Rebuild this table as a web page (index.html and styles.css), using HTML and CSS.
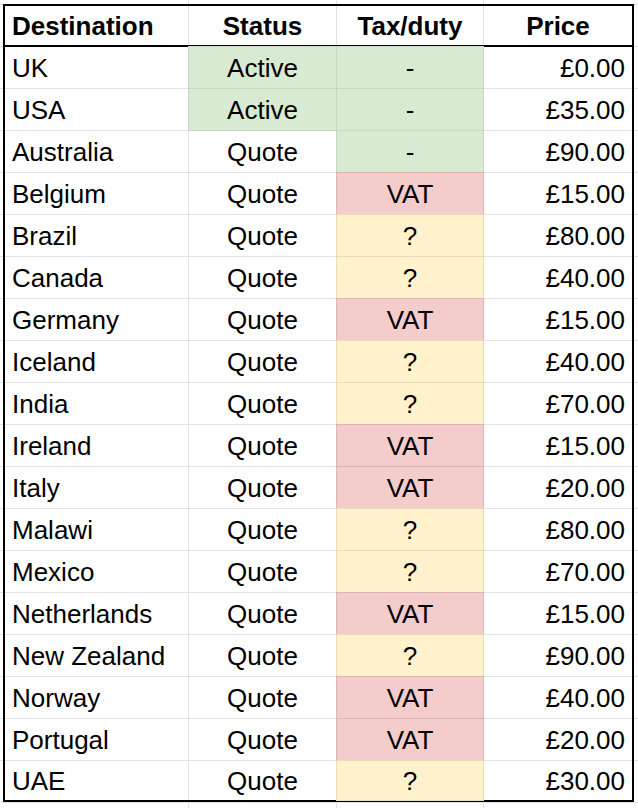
FILE: index.html
```html
<!DOCTYPE html>
<html lang="en">
<head>
<meta charset="utf-8">
<title>Destinations</title>
<link rel="stylesheet" href="styles.css">
</head>
<body>
<div class="page">
  <div class="table">
    <div class="head">
      <div class="cell left">Destination</div>
      <div class="cell center">Status</div>
      <div class="cell center">Tax/duty</div>
      <div class="cell center">Price</div>
    </div>
    <div class="body">
      <div class="cell left">UK</div><div class="cell center green">Active</div><div class="cell center green">-</div><div class="cell right">£0.00</div>
      <div class="cell left">USA</div><div class="cell center green">Active</div><div class="cell center green">-</div><div class="cell right">£35.00</div>
      <div class="cell left">Australia</div><div class="cell center">Quote</div><div class="cell center green">-</div><div class="cell right">£90.00</div>
      <div class="cell left">Belgium</div><div class="cell center">Quote</div><div class="cell center red">VAT</div><div class="cell right">£15.00</div>
      <div class="cell left">Brazil</div><div class="cell center">Quote</div><div class="cell center yellow">?</div><div class="cell right">£80.00</div>
      <div class="cell left">Canada</div><div class="cell center">Quote</div><div class="cell center yellow">?</div><div class="cell right">£40.00</div>
      <div class="cell left">Germany</div><div class="cell center">Quote</div><div class="cell center red">VAT</div><div class="cell right">£15.00</div>
      <div class="cell left">Iceland</div><div class="cell center">Quote</div><div class="cell center yellow">?</div><div class="cell right">£40.00</div>
      <div class="cell left">India</div><div class="cell center">Quote</div><div class="cell center yellow">?</div><div class="cell right">£70.00</div>
      <div class="cell left">Ireland</div><div class="cell center">Quote</div><div class="cell center red">VAT</div><div class="cell right">£15.00</div>
      <div class="cell left">Italy</div><div class="cell center">Quote</div><div class="cell center red">VAT</div><div class="cell right">£20.00</div>
      <div class="cell left">Malawi</div><div class="cell center">Quote</div><div class="cell center yellow">?</div><div class="cell right">£80.00</div>
      <div class="cell left">Mexico</div><div class="cell center">Quote</div><div class="cell center yellow">?</div><div class="cell right">£70.00</div>
      <div class="cell left">Netherlands</div><div class="cell center">Quote</div><div class="cell center red">VAT</div><div class="cell right">£15.00</div>
      <div class="cell left">New Zealand</div><div class="cell center">Quote</div><div class="cell center yellow">?</div><div class="cell right">£90.00</div>
      <div class="cell left">Norway</div><div class="cell center">Quote</div><div class="cell center red">VAT</div><div class="cell right">£40.00</div>
      <div class="cell left">Portugal</div><div class="cell center">Quote</div><div class="cell center red">VAT</div><div class="cell right">£20.00</div>
      <div class="cell left">UAE</div><div class="cell center">Quote</div><div class="cell center yellow">?</div><div class="cell right">£30.00</div>
    </div>
  </div>
</div>
</body>
</html>
```

FILE: styles.css
```css
html, body {
  margin: 0;
  padding: 0;
  background: #ffffff;
}

.page {
  width: 638px;
  height: 808px;
  overflow: hidden;
  box-sizing: border-box;
  padding: 4px 0 0 3px;
  font-family: "Liberation Sans", Arial, sans-serif;
  font-size: 26px;
  color: #000;
  background-color: #fff;
  background-image:
    linear-gradient(to right, transparent 188px, #e2e2e2 188px, #e2e2e2 189px, transparent 189px),
    linear-gradient(to right, transparent 336px, #e2e2e2 336px, #e2e2e2 337px, transparent 337px),
    linear-gradient(to right, transparent 483px, #e2e2e2 483px, #e2e2e2 484px, transparent 484px),
    repeating-linear-gradient(to bottom, #e2e2e2 0, #e2e2e2 1px, transparent 1px, transparent 42px);
  background-position: 0 0, 0 0, 0 0, 0 4px;
}

.table {
  width: 631px;
  border: 2px solid #000;
  box-sizing: border-box;
  background: #fff;
}

.head,
.body {
  display: grid;
  grid-template-columns: 183px 147px 146px 148px;
  column-gap: 1px;
  background: #e2e2e2;
}

.head {
  grid-template-rows: 39px;
  border-bottom: 2px solid #000;
}

.head .cell {
  font-weight: bold;
}

.body {
  row-gap: 1px;
  grid-template-rows: repeat(17, 41px) 39px;
}

.body .cell {
  padding-top: 1px;
}

.cell {
  background: #fff;
  display: flex;
  align-items: center;
  padding: 0 7px;
  white-space: nowrap;
  line-height: 1;
}

.left { justify-content: flex-start; }
.center { justify-content: center; }
.right { justify-content: flex-end; }

.green {
  background: #d9ead3;
  box-shadow: 0 0 0 1px #c6d8bf;
}

.red {
  background: #f4cccc;
  box-shadow: 0 0 0 1px #dcb6b7;
}

.yellow {
  background: #fff2cc;
  box-shadow: 0 0 0 1px #e8dcb9;
}
```
